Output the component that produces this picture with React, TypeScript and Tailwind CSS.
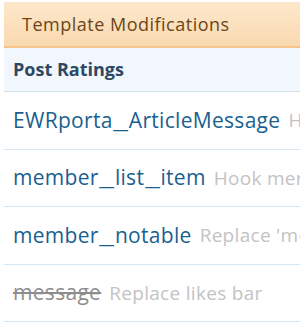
export default function App() {
  const font = { fontFamily: '"Open Sans", "DejaVu Sans", sans-serif' };
  const rows: { name: string; desc: string; disabled?: boolean }[] = [
    { name: "EWRporta_ArticleMessage", desc: "Hook EWRporta article message" },
    { name: "member_list_item", desc: "Hook member list item" },
    { name: "member_notable", desc: "Replace 'most likes'" },
    { name: "message", desc: "Replace likes bar", disabled: true },
  ];
  const renderName = (name: string) =>
    name.split("_").map((part, i) => (
      <span key={i}>
        {i > 0 && <span className="inline-block mx-[3.5px] tracking-normal scale-x-[1.6]">_</span>}
        {part}
      </span>
    ));
  return (
    <div className="w-[300px] h-[322px] bg-white overflow-hidden pt-[2px] pl-[4px]" style={font}>
      <div className="w-[400px]">
        <div className="h-[46px] bg-gradient-to-b from-[#fde8cd] to-[#fad9ae] border-b-2 border-[#f6c58e] flex items-center pl-[18px] text-[18px] tracking-[0.5px] text-[#6b4619] whitespace-nowrap">
          Template Modifications
        </div>
        <div className="h-[44px] bg-[#f1f7fc] border-b border-[#cfe2f0] flex items-center pl-[9px] text-[18px] font-bold text-[#2e4863] whitespace-nowrap">
          Post Ratings
        </div>
        {rows.map((r) => (
          <div
            key={r.name}
            className="h-[57.5px] border-b border-[#d7e8f4] flex items-center pl-[9px] whitespace-nowrap"
          >
            <span
              className={
                r.disabled
                  ? "text-[21px] tracking-[0.3px] text-[#8d8d8d] line-through"
                  : "text-[21px] tracking-[0.3px] text-[#1b5f8f]"
              }
            >
              {renderName(r.name)}
            </span>
            <span className="ml-[8px] text-[19px] tracking-[0.3px] text-[#c3c3c3]">{r.desc}</span>
          </div>
        ))}
      </div>
    </div>
  );
}
